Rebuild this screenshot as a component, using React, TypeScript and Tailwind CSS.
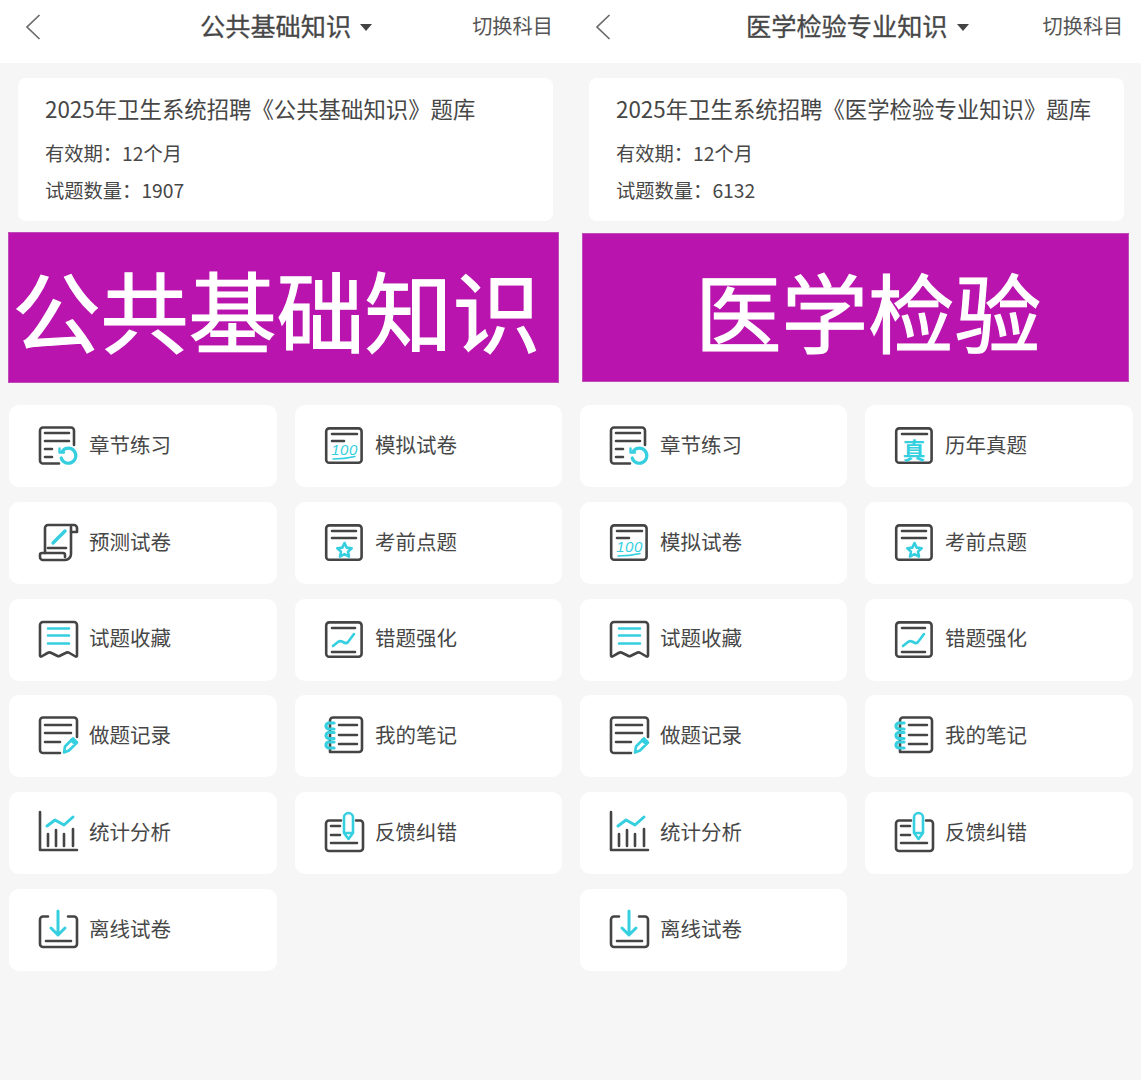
import React from "react";

const D = "#444444";
const C = "#35cfe0";
const sw = { fill: "none", strokeWidth: 2.6, strokeLinecap: "round" as const, strokeLinejoin: "round" as const };

const Svg = ({ children }: { children: React.ReactNode }) => (
  <svg width="40" height="40" viewBox="0 0 40 40" className="shrink-0 overflow-visible">
    {children}
  </svg>
);

const Frame = () => <rect {...sw} stroke={D} x="2.2" y="2.4" width="35.4" height="34.4" rx="3" />;

const icons: Record<string, React.ReactNode> = {
  chapter: (
    <Svg>
      <g {...sw} stroke={D}>
        <path d="M21 37.500H5a3 3 0 0 1-3-3V4.500a3 3 0 0 1 3-3h28a3 3 0 0 1 3 3V19" />
        <path d="M7 7h24M7 15h24M7 23h7M7 31h7" />
      </g>
      <g {...sw} stroke={C} strokeWidth={3.2}>
        <path d="M24.5 25a7.5 7.5 0 1 1-1.300 7" />
        <path d="M21.500 22.500v4h4.500" strokeWidth={2.4} />
      </g>
    </Svg>
  ),
  scroll: (
    <Svg>
      <g {...sw} stroke={D}>
        <path d="M7 30V5a3 3 0 0 1 3-3h26a3 3 0 0 1 3 3v4h-6" />
        <path d="M33 4v27a6 6 0 0 1-6 6H5a3 3 0 0 1-3-3v-2a2 2 0 0 1 2-2h21a2 2 0 0 1 2 2v2" />
        <path d="M10 25h18" />
      </g>
      <path d="M15 20 27 8" stroke={C} strokeWidth="3.4" fill="none" strokeLinecap="round" />
    </Svg>
  ),
  bookmark: (
    <Svg>
      <path {...sw} stroke={D} d="M5 2h31a3 3 0 0 1 3 3v30.500a1 1 0 0 1-1.500 1l-6-3.500a4 4 0 0 0-4 0l-6 3a2 2 0 0 1-2 0l-6-3a4 4 0 0 0-4 0l-6 3.500a1 1 0 0 1-1.500-1V5a3 3 0 0 1 3-3z" />
      <path {...sw} stroke={C} d="M10 8.500h21M10 15.500h21M10 23.500h21" />
    </Svg>
  ),
  mock: (
    <Svg>
      <Frame />
      <path {...sw} stroke={D} d="M8 8h25M8 15h12" />
      <text x="20.500" y="29" textAnchor="middle" fontSize="15" fontStyle="italic" letterSpacing="0.5" fontFamily="'Liberation Sans', sans-serif" fill={C}>100</text>
      <path d="M9 33q12 0 22-2.500" stroke={C} strokeWidth="1.500" fill="none" strokeLinecap="round" />
    </Svg>
  ),
  star: (
    <Svg>
      <Frame />
      <path {...sw} stroke={D} d="M8 8h24M8 15h24" />
      <path {...sw} stroke={C} d="m20.500 20 2.200 4.600 5 .6-3.700 3.400 1 5-4.500-2.500-4.500 2.500 1-5-3.700-3.400 5-.6z" />
    </Svg>
  ),
  wrong: (
    <Svg>
      <Frame />
      <path {...sw} stroke={D} d="M8 8h23M8 32h23" />
      <path {...sw} stroke={C} d="m9 26 5-4q2-1.500 4-.5l3 1.500q1.500.5 3-1l6-8" />
    </Svg>
  ),
  record: (
    <Svg>
      <path {...sw} stroke={D} d="M22 37H5a3 3 0 0 1-3-3V4.500a3 3 0 0 1 3-3h31a3 3 0 0 1 3 3V21" />
      <path {...sw} stroke={D} d="M7 9h26M7 17h26M7 26h15" />
      <path {...sw} stroke={C} d="m26 36.500 1-6 8-8 4 4-8 8zM33 24l4 4" />
    </Svg>
  ),
  notes: (
    <Svg>
      <path {...sw} stroke={D} d="M6 36V4.500a3 3 0 0 1 3-3h26a3 3 0 0 1 3 3V33a3 3 0 0 1-3 3z" />
      <path {...sw} stroke={D} d="M15 9h18M15 19h18M15 28h18" />
      <g stroke={C} strokeWidth="3.2" fill="none" strokeLinecap="round">
        <path d="M10 7H5a3 3 0 0 0 0 6h5" />
        <path d="M10 16.500H5a3 3 0 0 0 0 6h5" />
        <path d="M10 26H5a3 3 0 0 0 0 6h5" />
      </g>
    </Svg>
  ),
  stats: (
    <Svg>
      <path {...sw} stroke={D} d="M2 -1v38h37M10 21v12M18 17v16M26 21v12M35 16v17" />
      <path {...sw} stroke={C} strokeWidth={3} d="m9 13 8-6 9 5 9-8" />
    </Svg>
  ),
  feedback: (
    <Svg>
      <path {...sw} stroke={D} d="M17 7.500H5a3 3 0 0 0-3 3V35a3 3 0 0 0 3 3h31a3 3 0 0 0 3-3V10.500a3 3 0 0 0-3-3h-4" />
      <path {...sw} stroke={D} d="M7 13h9M7 22h9M7 30h26" />
      <path {...sw} stroke={C} d="M20 4.500a4.400 4.400 0 0 1 9 0V20l-4.500 6-4.500-6zM20 20h9" />
    </Svg>
  ),
  offline: (
    <Svg>
      <path {...sw} stroke={D} d="M10 6.500H5a3 3 0 0 0-3 3V34a3 3 0 0 0 3 3h31a3 3 0 0 0 3-3V9.500a3 3 0 0 0-3-3h-6" />
      <path {...sw} stroke={D} d="M8 31h25" />
      <path {...sw} stroke={C} strokeWidth={3} d="M20 1v24M13 18l7 7 7-7" />
    </Svg>
  ),
  real: (
    <Svg>
      <Frame />
      <path {...sw} stroke={D} d="M8 8h25" />
      <text x="20" y="33" textAnchor="middle" fontSize="23" fontWeight="700" fontFamily="'Noto Sans CJK SC', sans-serif" fill={C}>真</text>
    </Svg>
  ),
};

const Tile = ({ icon, label }: { icon: string; label: string }) => (
  <div className="flex h-[82px] items-center gap-[11px] rounded-[10px] bg-white pl-[29px]">
    {icons[icon]}
    <span className="pb-[4px] text-[20.5px] leading-none text-[#474747]">{label}</span>
  </div>
);

const Caret = () => <span className="block h-0 w-0 border-x-[6.5px] border-t-[7px] border-x-transparent border-t-[#444444]" />;

const Chevron = () => (
  <svg width="16" height="26" viewBox="0 0 16 26" className="block shrink-0">
    <path d="M14.5 1 2 13l12.500 12" fill="none" stroke="#6a6a6a" strokeWidth="1.7" />
  </svg>
);

const left = [
  ["chapter", "章节练习"], ["mock", "模拟试卷"],
  ["scroll", "预测试卷"], ["star", "考前点题"],
  ["bookmark", "试题收藏"], ["wrong", "错题强化"],
  ["record", "做题记录"], ["notes", "我的笔记"],
  ["stats", "统计分析"], ["feedback", "反馈纠错"],
  ["offline", "离线试卷"],
];
const right = [
  ["chapter", "章节练习"], ["real", "历年真题"],
  ["mock", "模拟试卷"], ["star", "考前点题"],
  ["bookmark", "试题收藏"], ["wrong", "错题强化"],
  ["record", "做题记录"], ["notes", "我的笔记"],
  ["stats", "统计分析"], ["feedback", "反馈纠错"],
  ["offline", "离线试卷"],
];

const Info = ({ title, count, className }: { title: string; count: string; className: string }) => (
  <div className={`flex h-[143px] w-[535px] flex-col rounded-[8px] bg-white pl-[27px] text-[#474747] ${className}`}>
    <div className="mt-[15px] text-[22.4px] leading-[30px] whitespace-nowrap">{title}</div>
    <div className="mt-[16px] text-[19.3px] leading-[28px]">有效期：12个月</div>
    <div className="mt-[9px] text-[19.3px] leading-[28px]">试题数量：{count}</div>
  </div>
);

export default function App() {
  return (
    <div className="flex h-[1080px] w-[1141px] overflow-hidden bg-[#f6f6f6] font-['Noto_Sans_CJK_SC','Noto_Sans',sans-serif]">
      <div className="w-[570px] shrink-0">
        <div className="flex h-[63px] items-center bg-white pb-[9px]">
          <div className="ml-[25px]"><Chevron /></div>
          <div className="ml-[159px] pb-[3px] text-[25.2px] leading-none text-[#474747] [-webkit-text-stroke:0.3px_#474747]">公共基础知识</div>
          <div className="ml-[9px]"><Caret /></div>
          <div className="ml-[100px] pb-[2px] text-[20.2px] leading-none text-[#555555]">切换科目</div>
        </div>
        <Info className="ml-[18px] mt-[15px]" title="2025年卫生系统招聘《公共基础知识》题库" count="1907" />
        <div className="ml-[8px] mt-[11px] flex h-[151px] w-[551px] items-center justify-center border border-[#c04cb8] bg-[#b915ae] pr-[14px] text-[88px] leading-none whitespace-nowrap text-white [-webkit-text-stroke:1.2px_white]">
          公共基础知识
        </div>
        <div className="ml-[9px] mt-[22px] grid grid-cols-[268px_267px] gap-x-[18px] gap-y-[14.8px]">
          {left.map(([i, l]) => <Tile key={l} icon={i} label={l} />)}
        </div>
      </div>
      <div className="w-[571px] shrink-0">
        <div className="flex h-[63px] items-center bg-white pb-[9px]">
          <div className="ml-[25px]"><Chevron /></div>
          <div className="ml-[135px] pb-[3px] text-[25.2px] leading-none text-[#474747] [-webkit-text-stroke:0.3px_#474747]">医学检验专业知识</div>
          <div className="ml-[9px]"><Caret /></div>
          <div className="ml-[74px] pb-[2px] text-[20.2px] leading-none text-[#555555]">切换科目</div>
        </div>
        <Info className="ml-[19px] mt-[15px]" title="2025年卫生系统招聘《医学检验专业知识》题库" count="6132" />
        <div className="ml-[12px] mt-[12px] flex h-[149px] w-[547px] items-center justify-center border border-[#c04cb8] bg-[#b915ae] pl-[25px] pt-[6px] text-[86.5px] leading-none whitespace-nowrap text-white [-webkit-text-stroke:1.2px_white]">
          医学检验
        </div>
        <div className="ml-[10px] mt-[23px] grid grid-cols-[267px_268px] gap-x-[18px] gap-y-[14.8px]">
          {right.map(([i, l]) => <Tile key={l} icon={i} label={l} />)}
        </div>
      </div>
    </div>
  );
}
